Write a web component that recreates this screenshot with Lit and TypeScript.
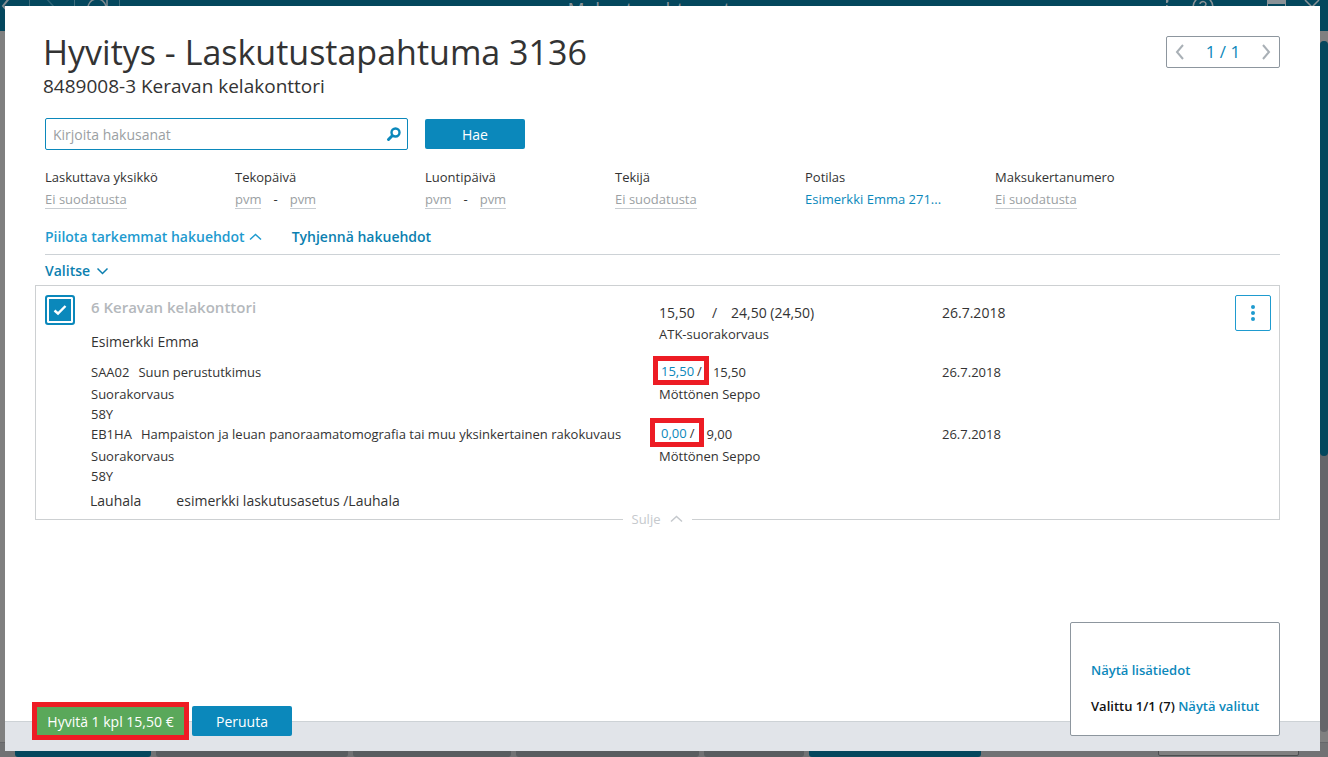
import { LitElement, html, css, nothing } from "lit";
import { customElement, property } from "lit/decorators.js";

interface Procedure {
  code: string;
  name: string;
  refund: string;
  price: string;
  date: string;
  wide?: boolean;
}

const PROCEDURES: Procedure[] = [
  { code: "SAA02", name: "Suun perustutkimus", refund: "15,50", price: "15,50", date: "26.7.2018" },
  {
    code: "EB1HA",
    name: "Hampaiston ja leuan panoraamatomografia tai muu yksinkertainen rakokuvaus",
    refund: "0,00",
    price: "9,00",
    date: "26.7.2018",
    wide: true,
  },
];

const chevron = (d: string, w: number, h: number, cls = "") => html`<svg
  class=${cls}
  width=${w}
  height=${h}
  viewBox="0 0 ${w} ${h}"
  fill="none"
  stroke="currentColor"
  aria-hidden="true"
>
  <path d=${d} />
</svg>`;

const up = () => chevron("M1 6.5 L6.5 1.5 L12 6.5", 13, 8, "caret");
const down = () => chevron("M1.5 1.5 L6.5 6.5 L11.5 1.5", 13, 8, "caret");

/* Dimmed application window that stays visible around the dialog. */
@customElement("app-backdrop")
export class AppBackdrop extends LitElement {
  static styles = css`
    :host {
      display: flex;
      flex-direction: column;
      height: 100%;
      overflow: hidden;
      background: #808080;
      font-family: "Open Sans", "Noto Sans", sans-serif;
      color: #8a9297;
    }
    .bar {
      display: flex;
      justify-content: space-between;
      height: 31px;
      flex: none;
      background: #04475d;
    }
    .nav,
    .tools {
      display: flex;
      flex: 0 0 162px;
    }
    .title {
      margin-right: 30px;
      font-size: 19px;
      line-height: 18px;
      white-space: nowrap;
    }
    .middle {
      flex: 1;
      display: flex;
      justify-content: flex-end;
      min-height: 0;
      padding-top: 10px;
    }
    .track {
      width: 8px;
      background: #65666a;
      border-radius: 4px;
      margin-bottom: 10px;
    }
    .thumb {
      height: 60%;
      background: #04475d;
      border-radius: 4px;
    }
    .foot {
      display: flex;
      gap: 5px;
      height: 14px;
      flex: none;
      padding: 0 15px;
      background: #717274;
      border-top: 1px solid #66676a;
    }
    .key {
      background: #595d60;
      border-radius: 0 0 3px 3px;
    }
    .key.primary {
      background: #04475d;
    }
    .field {
      box-sizing: border-box;
      width: 141px;
      height: 13px;
      margin-left: auto;
      margin-right: 14px;
      background: #808080;
      border: 1px solid #4c4e50;
      border-radius: 2px;
    }
  `;

  render() {
    const keys = [136, 192, 158, 183, 100, 172];
    return html`
      <div class="bar">
        <svg class="nav" width="162" height="31" fill="none" stroke="#7f8b91" stroke-width="2" aria-hidden="true">
          <path d="M11 -4 L3 6 L11 15" />
          <path d="M45 -3 L55 8" stroke="#2d6274" stroke-width="1.5" />
          <path d="M29.5 0 V31 M74.5 0 V31 M119.5 0 V31" stroke="#3d6c7c" stroke-width="1" />
          <path d="M88 9 A9 9 0 0 1 106 7 M107 0 V8 H100" stroke-width="1.5" />
        </svg>
        <div class="title">Maksutapahtumat</div>
        <svg class="tools" width="162" height="31" fill="none" stroke="#8a9297" aria-hidden="true">
          <circle cx="0.5" cy="1" r="2" fill="#8a9297" stroke="none" />
          <circle cx="0.5" cy="7" r="2" fill="#8a9297" stroke="none" />
          <circle cx="37" cy="7" r="10" stroke-width="1.5" />
          <path d="M34 4 A3 2.5 0 1 1 39 6 L37 9" stroke-width="1.5" />
          <path d="M101.5 0 H119.5 V16 H101.5 Z" stroke-width="1" />
          <path d="M101 2 H120" stroke-width="4" />
          <path d="M139 0 L153 14 M153 0 L139 14" stroke-width="1.5" />
        </svg>
      </div>
      <div class="middle">
        <div class="track"><div class="thumb"></div></div>
      </div>
      <div class="foot">
        ${keys.map(
          (w, i) => html`<div class="key ${i === 0 || i === 5 ? "primary" : ""}" style="width:${w}px"></div>`
        )}
        <div class="field"></div>
      </div>
    `;
  }
}

@customElement("search-filter")
export class SearchFilter extends LitElement {
  @property() label = "";
  @property() value = "";
  @property({ type: Boolean }) range = false;
  @property({ type: Boolean }) active = false;

  static styles = css`
    :host {
      display: block;
      font-size: 13px;
      line-height: 20px;
      color: #333;
    }
    .row {
      display: flex;
      gap: 12px;
      margin-top: 4px;
    }
    button {
      font: inherit;
      line-height: 17px;
      padding: 0;
      border: 0;
      border-bottom: 1px solid #c8cdd2;
      background: none;
      color: #9b9fa3;
    }
    button.active {
      color: #0b88bb;
      border-color: transparent;
    }
    .dash {
      line-height: 17px;
    }
  `;

  render() {
    const button = html`<button type="button" class=${this.active ? "active" : ""} aria-label="${this.label}: ${this.value}">
      ${this.value}
    </button>`;
    return html`
      <div>${this.label}</div>
      <div class="row">${button}${this.range ? html`<span class="dash">-</span>${button}` : nothing}</div>
    `;
  }
}

@customElement("app-root")
export class AppRoot extends LitElement {
  static styles = css`
    :host {
      display: block;
      height: 100vh;
      font-family: "Open Sans", "Noto Sans", sans-serif;
      font-size: 13px;
      line-height: 20px;
      color: #333;
    }
    * {
      box-sizing: border-box;
    }
    .dialog {
      position: fixed;
      inset: 6px 8px 6px 5px;
      display: flex;
      flex-direction: column;
      background: #fff;
      overflow: auto;
    }
    button,
    input {
      font: inherit;
      margin: 0;
    }
    a {
      color: #0b88bb;
      text-decoration: none;
    }
    .head {
      display: flex;
      justify-content: space-between;
      align-items: flex-start;
      padding: 22px 40px 0 38px;
    }
    h1 {
      margin: 0;
      font-size: 34px;
      font-weight: 400;
      line-height: 48px;
    }
    .sub {
      font-size: 19px;
      line-height: 20px;
    }
    .pager {
      display: flex;
      align-items: center;
      justify-content: space-between;
      width: 114px;
      height: 32px;
      margin-top: 8px;
      border: 1px solid #8d969e;
      border-radius: 2px;
      color: #0b88bb;
      font-size: 17px;
    }
    .pager button {
      display: flex;
      padding: 0 7px;
      border: 0;
      background: none;
      color: #a9b0b6;
      stroke-width: 2;
    }
    .search {
      padding: 22px 40px 0;
    }
    .query {
      display: flex;
      align-items: center;
      gap: 17px;
    }
    .box {
      display: flex;
      align-items: center;
      width: 363px;
      height: 32px;
      padding: 0 6px 0 7px;
      border: 1px solid #0b88bb;
      border-radius: 2px;
    }
    .box input {
      flex: 1;
      min-width: 0;
      height: 30px;
      padding: 1px 0 0;
      border: 0;
      outline: 0;
      font-size: 14px;
      color: #333;
    }
    .box input::placeholder {
      color: #9b9fa3;
      opacity: 1;
    }
    .button {
      min-width: 100px;
      height: 30px;
      padding: 1px 9px 0;
      border: 0;
      border-radius: 2px;
      background: #0b88bb;
      color: #fff;
      font-size: 14px;
    }
    .filters {
      display: grid;
      grid-template-columns: repeat(6, minmax(0, 190px));
      margin-top: 17px;
    }
    .links {
      display: flex;
      gap: 30px;
      margin-top: 18px;
      padding-bottom: 7px;
      border-bottom: 1px solid #cdd2d6;
    }
    .link {
      display: inline-flex;
      align-items: center;
      gap: 6px;
      padding: 0;
      border: 0;
      background: none;
      color: #0b7fb0;
      font-size: 14px;
      font-weight: 600;
      line-height: 20px;
    }
    .link.light {
      gap: 4px;
      color: #1f9bcf;
    }
    .caret {
      stroke-width: 1.5;
    }
    .select {
      display: flex;
      margin-top: 6px;
    }
    .card {
      margin: 4px 40px 0 30px;
      border: 1px solid #cdd0d2;
      border-bottom: 0;
    }
    .line {
      display: grid;
      grid-template-columns: 46px minmax(0, 568fr) minmax(0, 283fr) minmax(0, 293fr) 36px;
      padding: 0 8px 0 9px;
    }
    .line.top {
      padding-top: 9px;
      margin-bottom: 9px;
    }
    .tick {
      display: grid;
      width: 30px;
      height: 30px;
    }
    .tick input,
    .tick svg {
      grid-area: 1 / 1;
    }
    .tick input {
      appearance: none;
      width: 30px;
      height: 30px;
      border: 2px solid #0b88bb;
      border-radius: 3px;
      background: #0b88bb;
      box-shadow: inset 0 0 0 2px #fff;
    }
    .tick svg {
      pointer-events: none;
    }
    .unit {
      margin: 1px 0 13px;
      font-size: 15px;
      font-weight: 600;
      line-height: 22px;
      color: #b4b8bc;
    }
    .large {
      font-size: 14px;
      line-height: 22px;
    }
    .sums {
      display: grid;
      grid-template-columns: 53px 19px auto;
      white-space: nowrap;
    }
    .drop {
      padding-top: 7px;
    }
    .menu {
      display: grid;
      place-items: center;
      width: 36px;
      height: 36px;
      padding: 0;
      border: 1px solid #1f9bcf;
      border-radius: 2px;
      background: #fff;
    }
    .name {
      display: flex;
      gap: 9px;
      margin-bottom: 2px;
      white-space: nowrap;
    }
    .cost {
      display: flex;
      gap: 4px;
      height: 20px;
      margin-bottom: 2px;
    }
    .frame {
      display: flex;
      gap: 3px;
      height: 29px;
      margin: -6px 0 0 -6px;
      padding: 0 2px 0 3px;
      border: 5px solid #ed1c24;
    }
    .frame.wide {
      margin-left: -9px;
      padding: 0 5px 0 6px;
    }
    .cost.tight {
      gap: 2px;
    }
    .origin {
      display: flex;
      gap: 35px;
      padding: 5px 0 8px 54px;
      font-size: 14px;
    }
    .close {
      display: flex;
      align-items: center;
      gap: 9px;
      height: 20px;
      margin: -10px 40px 0 30px;
    }
    .close::before,
    .close::after {
      content: "";
      flex: 1;
      height: 1px;
      background: #cdd0d2;
    }
    .close button {
      display: flex;
      align-items: center;
      gap: 10px;
      padding: 0;
      border: 0;
      background: none;
      color: #c5c9cd;
    }
    .footer {
      display: flex;
      align-items: flex-end;
      gap: 3px;
      margin-top: auto;
      padding: 0 40px 15px 27px;
      background: linear-gradient(to top, #e1e4e9 29px, #cdd2d6 29px, #cdd2d6 30px, transparent 30px);
    }
    .mark {
      display: flex;
      margin-bottom: -4px;
      border: 5px solid #ed1c24;
    }
    .button.go {
      min-width: 147px;
      height: 28px;
      border-radius: 0;
      background: #5aa85a;
    }
    .summary {
      display: flex;
      flex-direction: column;
      gap: 16px;
      margin-left: auto;
      min-width: 210px;
      padding: 37px 19px 19px 20px;
      border: 1px solid #8d969e;
      border-radius: 2px;
      background: #fff;
      font-weight: 600;
      color: #111;
      white-space: nowrap;
    }
  `;

  render() {
    return html`
      <app-backdrop></app-backdrop>
      <main class="dialog">
        <header class="head">
          <div>
            <h1>Hyvitys - Laskutustapahtuma 3136</h1>
            <div class="sub">8489008-3 Keravan kelakonttori</div>
          </div>
          <nav class="pager">
            <button type="button" aria-label="Edellinen">${chevron("M9 1 L3 8 L9 15", 11, 16)}</button>
            <span>1 / 1</span>
            <button type="button" aria-label="Seuraava">${chevron("M2 1 L8 8 L2 15", 11, 16)}</button>
          </nav>
        </header>

        <section class="search">
          <div class="query">
            <label class="box">
              <input type="text" placeholder="Kirjoita hakusanat" aria-label="Kirjoita hakusanat" />
              <svg width="15" height="15" viewBox="0 0 15 15" fill="none" stroke="#0b88bb" aria-hidden="true">
                <circle cx="9.5" cy="5.5" r="4" stroke-width="2.4" />
                <path d="M6 9 L2.5 12.5" stroke-width="3" stroke-linecap="round" />
              </svg>
            </label>
            <button type="button" class="button">Hae</button>
          </div>
          <div class="filters">
            <search-filter label="Laskuttava yksikkö" value="Ei suodatusta"></search-filter>
            <search-filter label="Tekopäivä" value="pvm" range></search-filter>
            <search-filter label="Luontipäivä" value="pvm" range></search-filter>
            <search-filter label="Tekijä" value="Ei suodatusta"></search-filter>
            <search-filter label="Potilas" value="Esimerkki Emma 271..." active></search-filter>
            <search-filter label="Maksukertanumero" value="Ei suodatusta"></search-filter>
          </div>
          <div class="links">
            <button type="button" class="link light">Piilota tarkemmat hakuehdot ${up()}</button>
            <button type="button" class="link">Tyhjennä hakuehdot</button>
          </div>
          <div class="select">
            <button type="button" class="link">Valitse ${down()}</button>
          </div>
        </section>

        <section class="card">
          <div class="line top">
            <label class="tick">
              <input type="checkbox" checked aria-label="6 Keravan kelakonttori" />
              <svg width="30" height="30" viewBox="0 0 30 30" fill="none" stroke="#fff" stroke-width="2.4" aria-hidden="true">
                <path d="M9.5 15.5 L13 18.5 L20.5 11" />
              </svg>
            </label>
            <div>
              <div class="unit">6 Keravan kelakonttori</div>
              <div class="large">Esimerkki Emma</div>
            </div>
            <div class="drop">
              <div class="large sums"><span>15,50</span><span>/</span><span>24,50 (24,50)</span></div>
              <div>ATK-suorakorvaus</div>
            </div>
            <div class="drop large">26.7.2018</div>
            <button type="button" class="menu" aria-label="Toiminnot">
              <svg width="6" height="18" viewBox="0 0 6 18" fill="#1f9bcf" aria-hidden="true">
                <circle cx="3" cy="3" r="2" />
                <circle cx="3" cy="9" r="2" />
                <circle cx="3" cy="15" r="2" />
              </svg>
            </button>
          </div>
          ${PROCEDURES.map(
            (p) => html`<div class="line">
              <span></span>
              <div>
                <div class="name"><span>${p.code}</span><span>${p.name}</span></div>
                <div>Suorakorvaus</div>
                <div>58Y</div>
              </div>
              <div>
                <div class="cost ${p.wide ? "tight" : ""}">
                  <span class="frame ${p.wide ? "wide" : ""}"><a href="#">${p.refund}</a><span>/</span></span>
                  <span>${p.price}</span>
                </div>
                <div>Möttönen Seppo</div>
              </div>
              <div>${p.date}</div>
            </div>`
          )}
          <div class="origin"><span>Lauhala</span><span>esimerkki laskutusasetus /Lauhala</span></div>
        </section>
        <div class="close"><button type="button">Sulje ${up()}</button></div>

        <footer class="footer">
          <div class="mark"><button type="button" class="button go">Hyvitä 1 kpl 15,50 €</button></div>
          <button type="button" class="button">Peruuta</button>
          <div class="summary">
            <div><a href="#">Näytä lisätiedot</a></div>
            <div>Valittu 1/1 (7) <a href="#">Näytä valitut</a></div>
          </div>
        </footer>
      </main>
    `;
  }
}
